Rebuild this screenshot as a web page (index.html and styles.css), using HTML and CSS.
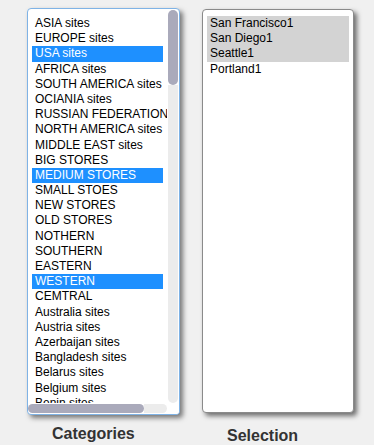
FILE: index.html
```html
<!DOCTYPE html>
<html>
<head>
<meta charset="utf-8">
<link rel="stylesheet" href="styles.css">
</head>
<body>
<div class="page">
  <div class="col col-left">
    <div class="listbox listbox-cat">
      <div class="viewport">
        <div class="opt">ASIA sites</div>
        <div class="opt">EUROPE sites</div>
        <div class="opt sel">USA sites</div>
        <div class="opt">AFRICA sites</div>
        <div class="opt">SOUTH AMERICA sites</div>
        <div class="opt">OCIANIA sites</div>
        <div class="opt">RUSSIAN FEDERATION sites</div>
        <div class="opt">NORTH AMERICA sites</div>
        <div class="opt">MIDDLE EAST sites</div>
        <div class="opt">BIG STORES</div>
        <div class="opt sel">MEDIUM STORES</div>
        <div class="opt">SMALL STOES</div>
        <div class="opt">NEW STORES</div>
        <div class="opt">OLD STORES</div>
        <div class="opt">NOTHERN</div>
        <div class="opt">SOUTHERN</div>
        <div class="opt">EASTERN</div>
        <div class="opt sel">WESTERN</div>
        <div class="opt">CEMTRAL</div>
        <div class="opt">Australia sites</div>
        <div class="opt">Austria sites</div>
        <div class="opt">Azerbaijan sites</div>
        <div class="opt">Bangladesh sites</div>
        <div class="opt">Belarus sites</div>
        <div class="opt">Belgium sites</div>
        <div class="opt">Benin sites</div>
      </div>
      <div class="vscroll"><div class="vthumb"></div></div>
      <div class="hscroll"><div class="hthumb"></div></div>
      <div class="corner"></div>
    </div>
    <div class="label label-cat">Categories</div>
  </div>
  <div class="col col-right">
    <div class="listbox listbox-sel">
      <div class="viewport viewport-sel">
        <div class="opt grey">San Francisco1</div>
        <div class="opt grey">San Diego1</div>
        <div class="opt grey">Seattle1</div>
        <div class="opt">Portland1</div>
      </div>
    </div>
    <div class="label label-sel">Selection</div>
  </div>
</div>
</body>
</html>
```

FILE: styles.css
```css
html, body {
  margin: 0;
  padding: 0;
  background: #f0f0f0;
}
body {
  font-family: "Liberation Sans", Arial, sans-serif;
  width: 374px;
  height: 445px;
  overflow: hidden;
}
.page {
  display: flex;
  flex-direction: row;
  align-items: flex-start;
  padding: 8px 0 0 27px;
  gap: 22px;
}
.col {
  display: flex;
  flex-direction: column;
}
.col-left { width: 153px; }
.col-right { width: 152px; padding-top: 1px; }

.listbox {
  box-sizing: border-box;
  background: #fff;
  border-radius: 4px;
  overflow: hidden;
}
.listbox-cat {
  height: 407px;
  border: 1px solid #7fb3e6;
  box-shadow: 3px 3px 5px rgba(0, 0, 0, 0.5);
  display: grid;
  grid-template-columns: 139px 12px;
  grid-template-rows: 394px 11px;
}
.listbox-sel {
  height: 404px;
  border: 1px solid #8a8a8a;
  box-shadow: 3px 3px 5px rgba(0, 0, 0, 0.55);
}
.viewport {
  overflow: hidden;
  padding: 7px 4px 0 4px;
  min-width: 0;
}
.viewport-sel {
  padding: 6px 4px 0 4px;
}
.opt {
  font-size: 12px;
  line-height: 15.2px;
  height: 15.2px;
  padding-left: 3px;
  color: #000;
  white-space: nowrap;
}
.opt.sel {
  background: #1e90ff;
  color: #fff;
}
.opt.grey {
  background: #d3d3d3;
  color: #000;
}
.vscroll {
  padding: 1px 1px 0 1px;
  display: flex;
  flex-direction: column;
}
.vscroll::after {
  content: "";
  flex: 1;
  background: #ececec;
  border-radius: 0 0 5px 5px;
}
.vthumb {
  height: 75px;
  background: #aaaabb;
  border-radius: 5px;
}
.hscroll {
  display: flex;
  padding: 1px 0 1px 0;
}
.hscroll::after {
  content: "";
  flex: 1;
  background: #ececec;
  border-radius: 0 5px 5px 0;
}
.hthumb {
  width: 116px;
  background: #aaaabb;
  border-radius: 5px;
}
.corner { background: #fff; }

.label {
  font-size: 16px;
  font-weight: bold;
  color: #333;
  line-height: 18px;
}
.label-cat {
  margin-top: 10px;
  padding-left: 25px;
}
.label-sel {
  margin-top: 14px;
  padding-left: 25px;
}
```
